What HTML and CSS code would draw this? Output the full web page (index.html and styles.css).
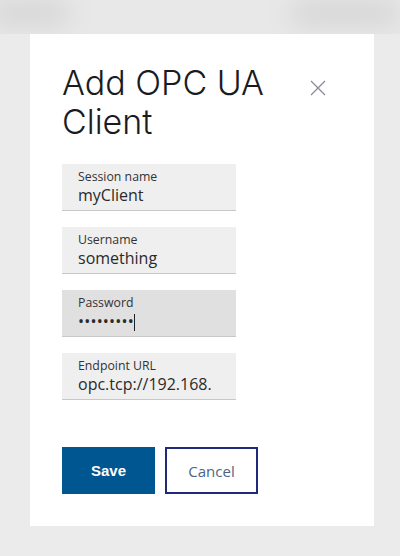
FILE: index.html
```html
<!DOCTYPE html>
<html lang="en">
<head>
  <meta charset="UTF-8" />
  <title>Add OPC UA Client</title>
  <link rel="stylesheet" href="styles.css">
</head>
<body>
  <!-- blurred page behind the dialog -->
  <div class="backdrop">
    <span class="smudge left"></span>
    <span class="smudge right"></span>
  </div>

  <div class="dialog">
    <div class="dialog-head">
      <h1>Add OPC UA Client</h1>
      <button class="close" aria-label="Close">
        <svg width="16" height="16" viewBox="0 0 16 16">
          <path d="M1 1 L15 15 M15 1 L1 15" stroke="#8a8a96" stroke-width="1.3" fill="none" />
        </svg>
      </button>
    </div>

    <form class="client-form">
      <div class="field">
        <label for="session">Session name</label>
        <input type="text" id="session" value="myClient">
      </div>

      <div class="field">
        <label for="username">Username</label>
        <input type="text" id="username" value="something">
      </div>

      <div class="field focused">
        <label for="password">Password</label>
        <div class="value">•••••••••<span class="caret"></span></div>
      </div>

      <div class="field">
        <label for="endpoint">Endpoint URL</label>
        <input type="text" id="endpoint" value="opc.tcp://192.168.">
      </div>

      <div class="actions">
        <button type="submit" class="btn primary">Save</button>
        <button type="button" class="btn secondary">Cancel</button>
      </div>
    </form>
  </div>
</body>
</html>
```

FILE: styles.css
```css
html, body {
  margin: 0;
  padding: 0;
  height: 100%;
  font-family: "Open Sans", "Noto Sans", Arial, sans-serif;
}

body {
  background-color: #ebebeb;
  position: relative;
  overflow: hidden;
}

.backdrop {
  position: absolute;
  top: 0;
  left: 0;
  right: 0;
  height: 34px;
  background-color: #e8e8e8;
  overflow: hidden;
}

.smudge {
  position: absolute;
  top: 0;
  height: 26px;
  background-color: #d6d6d6;
  filter: blur(12px);
  border-radius: 14px;
}

.smudge.left {
  left: -10px;
  width: 80px;
}

.smudge.right {
  left: 290px;
  width: 110px;
}

.dialog {
  position: relative;
  margin: 34px 0 0 30px;
  width: 344px;
  height: 492px;
  box-sizing: border-box;
  padding: 29px 48px 0 32px;
  background-color: #fff;
}

.dialog-head {
  display: flex;
  justify-content: space-between;
  align-items: flex-start;
}

.dialog-head h1 {
  margin: 0;
  width: 240px;
  font-family: Inter, "Open Sans", sans-serif;
  font-size: 34px;
  font-weight: 300;
  line-height: 39px;
  color: #1b1b1f;
}

.close {
  margin-top: 17px;
  padding: 0;
  border: none;
  background: none;
  width: 16px;
  height: 16px;
  cursor: pointer;
}

.client-form {
  margin-top: 23px;
  display: flex;
  flex-direction: column;
  gap: 16px;
}

.field {
  width: 174px;
  height: 47px;
  box-sizing: border-box;
  padding: 5px 15px 0 16px;
  background-color: #efefef;
  border-bottom: 1px solid #c8c8c8;
}

.field.focused {
  background-color: #e0e0e0;
}

.field label {
  display: block;
  font-size: 12.3px;
  line-height: 16px;
  color: #333;
}

.field input,
.field .value {
  display: block;
  width: 100%;
  margin: 0;
  padding: 0;
  border: none;
  outline: none;
  background: transparent;
  font-family: inherit;
  font-size: 16px;
  line-height: 20px;
  color: #2a2a2a;
}

.field .value {
  font-size: 16px;
  letter-spacing: 0.2px;
}

.caret {
  display: inline-block;
  width: 1px;
  height: 17px;
  margin-left: 0;
  vertical-align: -4px;
  background-color: #222;
}

.actions {
  margin-top: 31px;
  display: flex;
  gap: 10px;
}

.btn {
  width: 93px;
  height: 47px;
  box-sizing: border-box;
  font-family: "Liberation Sans", Arial, sans-serif;
  font-size: 15px;
  cursor: pointer;
}

.btn.primary {
  border: none;
  background-color: #005691;
  color: #fff;
  font-weight: 600;
}

.btn.secondary {
  border: 2px solid #1f2a7a;
  background-color: #fff;
  color: #4a6585;
  font-family: "Open Sans", sans-serif;
}
```
